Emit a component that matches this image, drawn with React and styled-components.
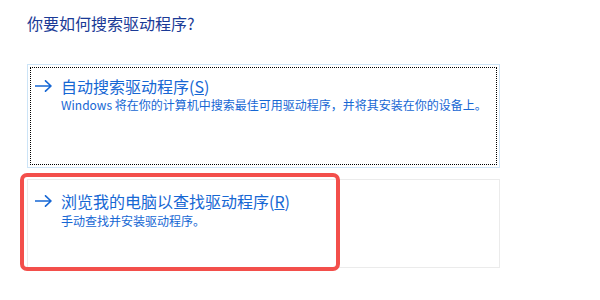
import React from "react";
import styled, { createGlobalStyle } from "styled-components";

const Global = createGlobalStyle`
  html, body { margin: 0; padding: 0; background: #ffffff; }
  body { font-family: "Noto Sans CJK SC", "Noto Sans", sans-serif; }
`;

const Page = styled.div`
  width: 600px;
  height: 300px;
  box-sizing: border-box;
  padding: 12px 0 0 27px;
  background: #fff;
`;

const Title = styled.div`
  font-size: 16px;
  line-height: 22px;
  color: #1a3a96;
  margin-bottom: 30px;
`;

const Options = styled.div`
  display: flex;
  flex-direction: column;
  gap: 11px;
  width: 473px;
`;

const Option = styled.div`
  position: relative;
  box-sizing: border-box;
  height: ${(p) => p.$h}px;
  border: 1px solid ${(p) => (p.$focused ? "#cce4f7" : "#ebebeb")};
  outline: ${(p) => (p.$focused ? "1px dotted #000" : "none")};
  outline-offset: -4px;
  padding: 10px 0 0 7px;
  display: flex;
  align-items: flex-start;
  gap: 9px;
`;

const ArrowWrap = styled.div`
  height: 22px;
  display: flex;
  align-items: center;
  color: #1667d4;
`;

const Texts = styled.div`
  display: flex;
  flex-direction: column;
`;

const LinkText = styled.div`
  font-size: 16px;
  line-height: 22px;
  color: #1667d4;
`;

const Desc = styled.div`
  font-size: 12px;
  line-height: 16px;
  color: #1667d4;
  margin-top: ${(p) => p.$mt || 0}px;
`;

const Highlight = styled.div`
  position: absolute;
  left: -8px;
  top: -7px;
  width: 320px;
  height: 98px;
  box-sizing: border-box;
  border: 4px solid #f34f4b;
  border-radius: 7px;
  pointer-events: none;
`;

const Arrow = () => (
  <svg width="17" height="12" viewBox="0 0 17 12" fill="none">
    <path
      d="M0.5 6H16M10.5 0.8L16 6L10.5 11.2"
      stroke="currentColor"
      strokeWidth="1.6"
      strokeLinecap="round"
      strokeLinejoin="round"
    />
  </svg>
);

export default function App() {
  return (
    <Page>
      <Global />
      <Title>你要如何搜索驱动程序?</Title>
      <Options>
        <Option $h={104} $focused>
          <ArrowWrap>
            <Arrow />
          </ArrowWrap>
          <Texts>
            <LinkText>
              自动搜索驱动程序(<u>S</u>)
            </LinkText>
            <Desc>
              Windows 将在你的计算机中搜索最佳可用驱动程序，并将其安装在你的设备上。
            </Desc>
          </Texts>
        </Option>
        <Option $h={89}>
          <ArrowWrap>
            <Arrow />
          </ArrowWrap>
          <Texts>
            <LinkText>
              浏览我的电脑以查找驱动程序(<u>R</u>)
            </LinkText>
            <Desc $mt={1}>手动查找并安装驱动程序。</Desc>
          </Texts>
          <Highlight />
        </Option>
      </Options>
    </Page>
  );
}
